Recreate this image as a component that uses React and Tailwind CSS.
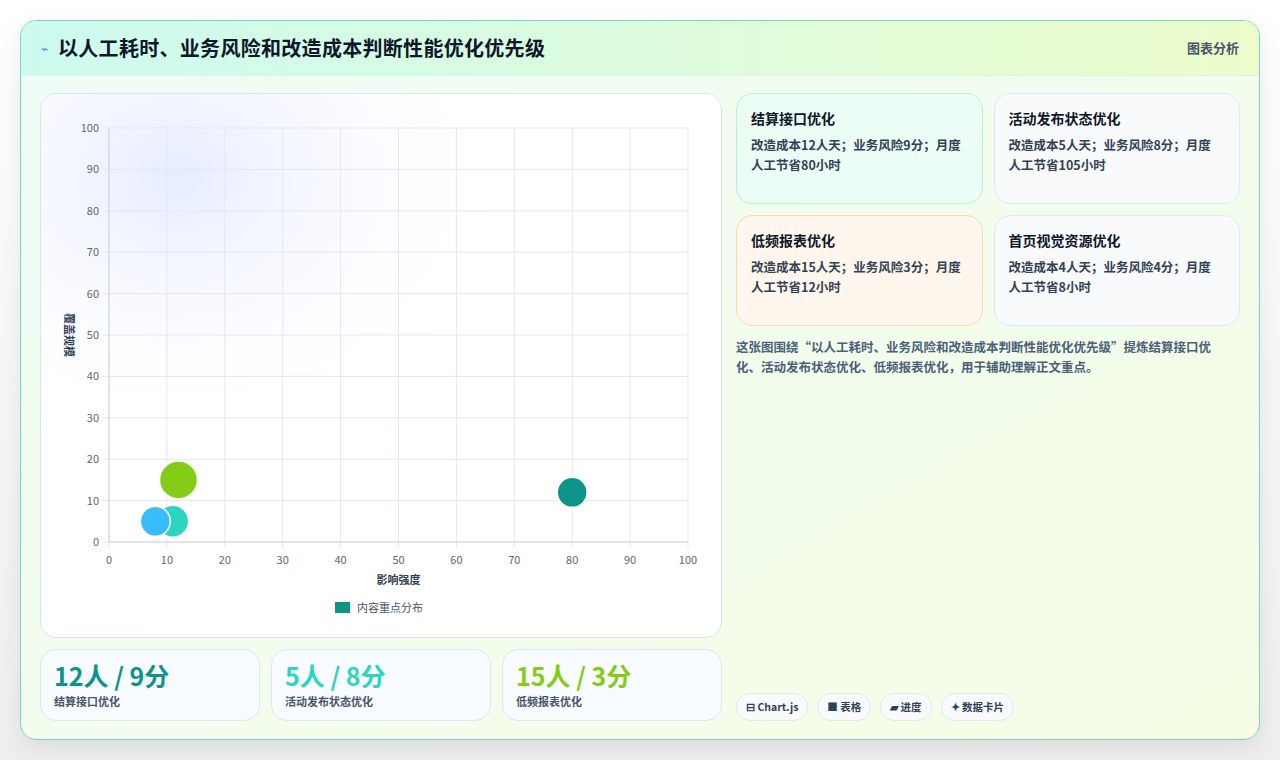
import React from 'react';

const font = { fontFamily: '"Noto Sans CJK SC", "Noto Sans", sans-serif' };

const cards = [
  { t: '结算接口优化', d: '改造成本12人天；业务风险9分；月度人工节省80小时', cls: 'bg-[#ecfdf5] border-[#bbf0d6]' },
  { t: '活动发布状态优化', d: '改造成本5人天；业务风险8分；月度人工节省105小时', cls: 'bg-[#f8fafc] border-[#dbeafe]' },
  { t: '低频报表优化', d: '改造成本15人天；业务风险3分；月度人工节省12小时', cls: 'bg-[#fff7ed] border-[#fcd9a8]' },
  { t: '首页视觉资源优化', d: '改造成本4人天；业务风险4分；月度人工节省8小时', cls: 'bg-[#f8fafc] border-[#dbeafe]' },
];

const stats = [
  { v: '12人 / 9分', l: '结算接口优化', c: 'text-[#0d9488]' },
  { v: '5人 / 8分', l: '活动发布状态优化', c: 'text-[#2dd4bf]' },
  { v: '15人 / 3分', l: '低频报表优化', c: 'text-[#84cc16]' },
];

const bubbles = [
  { x: 80, y: 12, r: 15, c: '#0d9488' },
  { x: 12, y: 15, r: 19, c: '#84cc16' },
  { x: 11, y: 5, r: 16, c: '#2dd4bf' },
  { x: 8, y: 5, r: 15, c: '#38bdf8' },
];

function Chart() {
  const X0 = 68, X1 = 647, Y0 = 448, Y1 = 34;
  const sx = (v) => X0 + ((X1 - X0) * v) / 100;
  const sy = (v) => Y0 - ((Y0 - Y1) * v) / 100;
  const ticks = [0, 10, 20, 30, 40, 50, 60, 70, 80, 90, 100];
  return (
    <svg width="681" height="543" viewBox="0 0 681 543" className="block">
      <defs>
        <radialGradient id="glow" cx="0.2" cy="0.15" r="0.5">
          <stop offset="0" stopColor="#e0e7ff" stopOpacity="0.8" />
          <stop offset="1" stopColor="#ffffff" stopOpacity="0" />
        </radialGradient>
      </defs>
      <rect width="681" height="543" fill="url(#glow)" />
      {ticks.map((t) => (
        <g key={t}>
          <line x1={sx(t)} x2={sx(t)} y1={Y1} y2={Y0 + 6} stroke="#e2e8f0" />
          <line x1={X0 - 6} x2={X1} y1={sy(t)} y2={sy(t)} stroke="#e2e8f0" />
          <text x={sx(t)} y={Y0 + 22} fontSize="11" fill="#666666" textAnchor="middle" style={font}>{t}</text>
          <text x={X0 - 10} y={sy(t) + 4} fontSize="11" fill="#666666" textAnchor="end" style={font}>{t}</text>
        </g>
      ))}
      <line x1={X0} x2={X1} y1={Y0} y2={Y0} stroke="#cbd5e1" />
      <line x1={X0} x2={X0} y1={Y1} y2={Y0} stroke="#cbd5e1" />
      <text x={(X0 + X1) / 2} y={490} fontSize="11" fontWeight="600" fill="#334155" textAnchor="middle" style={font}>影响强度</text>
      <text transform="translate(24 241) rotate(90)" fontSize="11" fontWeight="600" fill="#334155" textAnchor="middle" style={font}>覆盖规模</text>
      {bubbles.map((b, i) => (
        <circle key={i} cx={sx(b.x)} cy={sy(b.y)} r={b.r} fill={b.c} stroke="#ffffff" strokeWidth="1.5" />
      ))}
      <rect x={294} y={508} width={15} height={11} fill="#0d9488" />
      <text x={316} y={518} fontSize="11" fill="#475569" style={font}>内容重点分布</text>
    </svg>
  );
}

export default function App() {
  return (
    <div className="w-[1280px] h-[760px] bg-gradient-to-b from-white to-[#eeeeee] p-5" style={font}>
      <div className="h-[720px] rounded-2xl border border-[#7dd3c8] overflow-hidden flex flex-col bg-gradient-to-br from-[#effdf8] to-[#f5fde4] shadow-[0_8px_24px_rgba(0,0,0,0.08)]">
        <div className="h-[55px] shrink-0 flex items-center justify-between px-5 bg-gradient-to-r from-[#ccfbef] to-[#ecfccb] border-b border-[#d9f5ea]">
          <div className="flex items-center gap-[10px]">
            <span className="text-[12px] text-[#3b82f6]">⌁</span>
            <h1 className="text-[20px] font-bold text-[#0f172a] tracking-[0.3px]">以人工耗时、业务风险和改造成本判断性能优化优先级</h1>
          </div>
          <span className="text-[13px] font-semibold text-[#475569]">图表分析</span>
        </div>
        <div className="flex-1 flex gap-[14px] px-[19px] pt-[17px] pb-[18px]">
          <div className="w-[682px] flex flex-col gap-[11px]">
            <div className="h-[545px] rounded-2xl border border-[#dbe4ee] bg-white overflow-hidden">
              <Chart />
            </div>
            <div className="grid grid-cols-3 gap-[11px] flex-1">
              {stats.map((s) => (
                <div key={s.l} className="rounded-2xl border border-[#dbe7f3] bg-[#f8fbff] px-[13px] pt-[10px]">
                  <div className={`text-[25px] font-bold leading-tight ${s.c}`}>{s.v}</div>
                  <div className="text-[11px] font-semibold text-[#475569] mt-[2px]">{s.l}</div>
                </div>
              ))}
            </div>
          </div>
          <div className="flex-1 flex flex-col">
            <div className="grid grid-cols-2 gap-x-[11px] gap-y-[11px]">
              {cards.map((c) => (
                <div key={c.t} className={`h-[111px] rounded-2xl border pl-[14px] pr-[18px] pt-[14px] ${c.cls}`}>
                  <div className="text-[14px] font-bold text-[#0f172a]">{c.t}</div>
                  <div className="text-[12.5px] font-semibold text-[#334155] leading-[20px] mt-[6px] max-w-[215px]">{c.d}</div>
                </div>
              ))}
            </div>
            <p className="text-[12.5px] font-semibold text-[#4b6179] leading-[20px] mt-[11px] pr-[20px]">
              这张图围绕“以人工耗时、业务风险和改造成本判断性能优化优先级”提炼结算接口优化、活动发布状态优化、低频报表优化，用于辅助理解正文重点。
            </p>
            <div className="mt-auto flex gap-[9px]">
              {['⊟ Chart.js', '■ 表格', '▰ 进度', '✦ 数据卡片'].map((t) => (
                <span key={t} className="h-[28px] px-[9px] flex items-center rounded-full border border-[#e2e8f0] bg-[#f8fafc] text-[10.5px] font-bold text-[#334155]">{t}</span>
              ))}
            </div>
          </div>
        </div>
      </div>
    </div>
  );
}
